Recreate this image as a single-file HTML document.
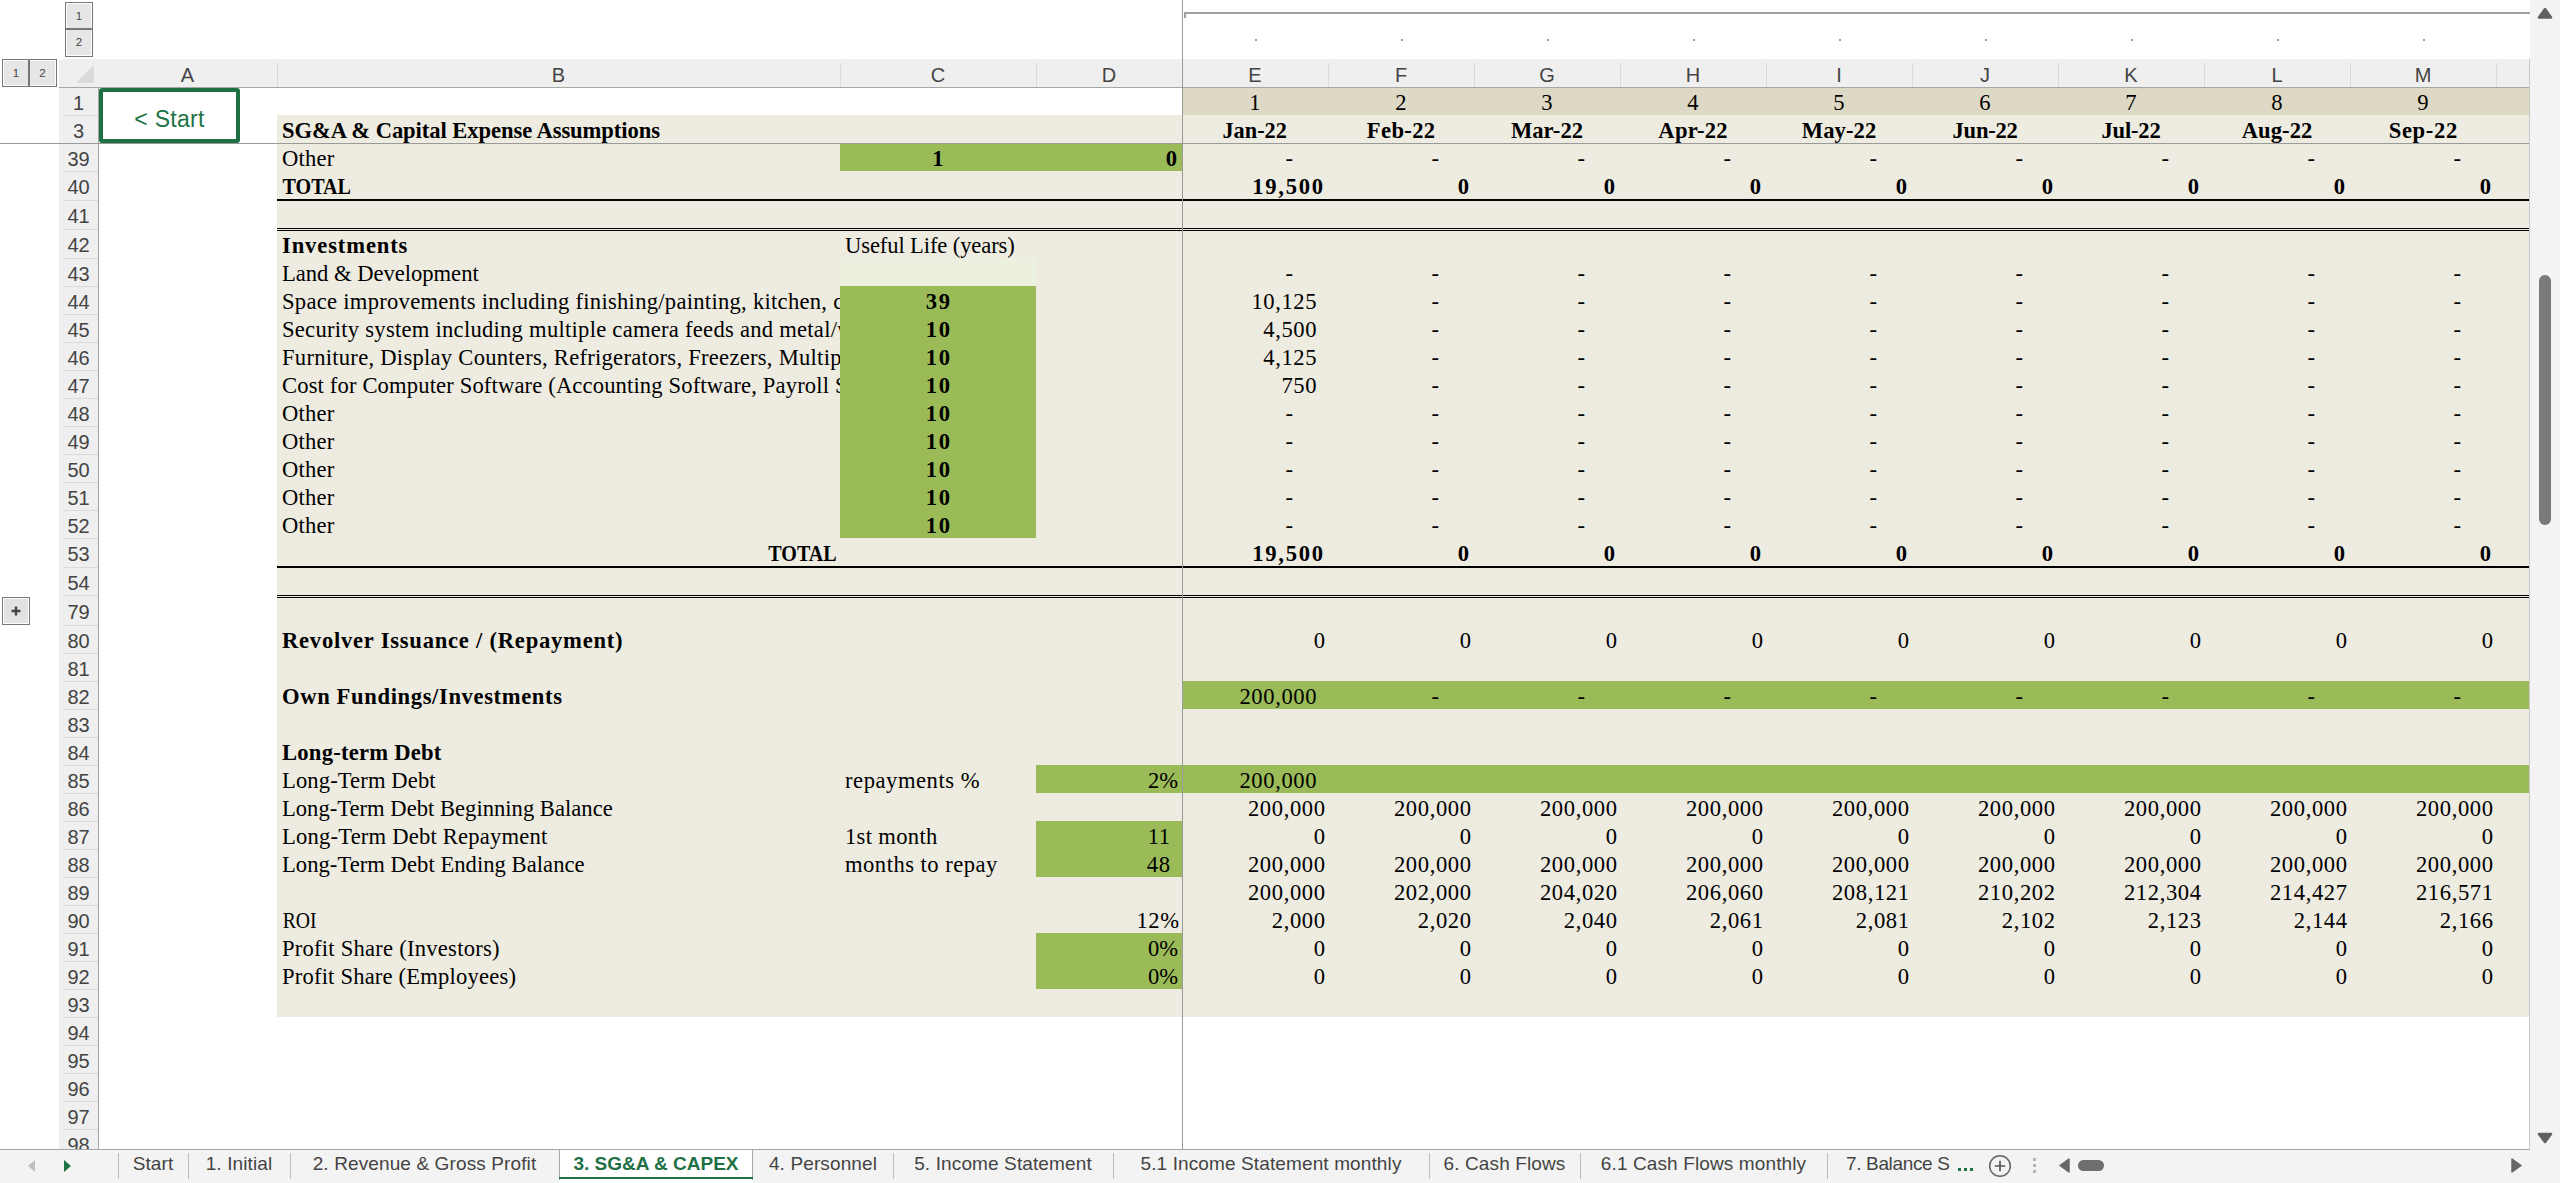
<!DOCTYPE html>
<html><head><meta charset="utf-8"><style>
html,body{margin:0;padding:0;}
body{width:2560px;height:1183px;overflow:hidden;position:relative;background:#fff;}
body>div,body>svg{position:absolute;}
</style></head><body>
<div style="left:2530px;top:0px;width:30px;height:1183px;background:#f3f3f3;"></div>
<div style="left:59px;top:59px;width:2471px;height:28px;background:#efefef;"></div>
<div style="left:59px;top:87px;width:39px;height:1062px;background:#efefef;"></div>
<div style="left:1183px;top:88px;width:1347px;height:27px;background:#ddd9c4;"></div>
<div style="left:277px;top:115px;width:2253px;height:902px;background:#eeece1;"></div>
<div style="left:840px;top:144px;width:342px;height:27px;background:#9bbb59;"></div>
<div style="left:840px;top:258px;width:196px;height:28px;background:#ebf1de;"></div>
<div style="left:840px;top:286px;width:196px;height:252px;background:#9bbb59;"></div>
<div style="left:1182px;top:681px;width:1348px;height:28px;background:#9bbb59;"></div>
<div style="left:1036px;top:765px;width:1494px;height:28px;background:#9bbb59;"></div>
<div style="left:1036px;top:821px;width:146px;height:56px;background:#9bbb59;"></div>
<div style="left:1036px;top:933px;width:146px;height:56px;background:#9bbb59;"></div>
<div style="left:277px;top:199px;width:2253px;height:2px;background:#000;"></div>
<div style="left:277px;top:228px;width:2253px;height:1px;background:#000;"></div>
<div style="left:277px;top:230px;width:2253px;height:1px;background:#000;"></div>
<div style="left:277px;top:566px;width:2253px;height:2px;background:#000;"></div>
<div style="left:277px;top:595px;width:2253px;height:1px;background:#000;"></div>
<div style="left:277px;top:597px;width:2253px;height:1px;background:#000;"></div>
<div style="left:98px;top:61px;width:179px;height:28px;line-height:28px;text-align:center;font-family:'Liberation Sans', sans-serif;font-size:20px;color:#444">A</div>
<div style="left:277px;top:61px;width:563px;height:28px;line-height:28px;text-align:center;font-family:'Liberation Sans', sans-serif;font-size:20px;color:#444">B</div>
<div style="left:277px;top:63px;width:1px;height:24px;background:#dadada"></div>
<div style="left:840px;top:61px;width:196px;height:28px;line-height:28px;text-align:center;font-family:'Liberation Sans', sans-serif;font-size:20px;color:#444">C</div>
<div style="left:840px;top:63px;width:1px;height:24px;background:#dadada"></div>
<div style="left:1036px;top:61px;width:146px;height:28px;line-height:28px;text-align:center;font-family:'Liberation Sans', sans-serif;font-size:20px;color:#444">D</div>
<div style="left:1036px;top:63px;width:1px;height:24px;background:#dadada"></div>
<div style="left:1182px;top:61px;width:146px;height:28px;line-height:28px;text-align:center;font-family:'Liberation Sans', sans-serif;font-size:20px;color:#444">E</div>
<div style="left:1328px;top:61px;width:146px;height:28px;line-height:28px;text-align:center;font-family:'Liberation Sans', sans-serif;font-size:20px;color:#444">F</div>
<div style="left:1328px;top:63px;width:1px;height:24px;background:#dadada"></div>
<div style="left:1474px;top:61px;width:146px;height:28px;line-height:28px;text-align:center;font-family:'Liberation Sans', sans-serif;font-size:20px;color:#444">G</div>
<div style="left:1474px;top:63px;width:1px;height:24px;background:#dadada"></div>
<div style="left:1620px;top:61px;width:146px;height:28px;line-height:28px;text-align:center;font-family:'Liberation Sans', sans-serif;font-size:20px;color:#444">H</div>
<div style="left:1620px;top:63px;width:1px;height:24px;background:#dadada"></div>
<div style="left:1766px;top:61px;width:146px;height:28px;line-height:28px;text-align:center;font-family:'Liberation Sans', sans-serif;font-size:20px;color:#444">I</div>
<div style="left:1766px;top:63px;width:1px;height:24px;background:#dadada"></div>
<div style="left:1912px;top:61px;width:146px;height:28px;line-height:28px;text-align:center;font-family:'Liberation Sans', sans-serif;font-size:20px;color:#444">J</div>
<div style="left:1912px;top:63px;width:1px;height:24px;background:#dadada"></div>
<div style="left:2058px;top:61px;width:146px;height:28px;line-height:28px;text-align:center;font-family:'Liberation Sans', sans-serif;font-size:20px;color:#444">K</div>
<div style="left:2058px;top:63px;width:1px;height:24px;background:#dadada"></div>
<div style="left:2204px;top:61px;width:146px;height:28px;line-height:28px;text-align:center;font-family:'Liberation Sans', sans-serif;font-size:20px;color:#444">L</div>
<div style="left:2204px;top:63px;width:1px;height:24px;background:#dadada"></div>
<div style="left:2350px;top:61px;width:146px;height:28px;line-height:28px;text-align:center;font-family:'Liberation Sans', sans-serif;font-size:20px;color:#444">M</div>
<div style="left:2350px;top:63px;width:1px;height:24px;background:#dadada"></div>
<div style="left:2496px;top:63px;width:1px;height:24px;background:#dadada"></div>
<div style="left:277px;top:63px;width:1px;height:24px;background:#dadada"></div>
<div style="left:59px;top:87px;width:2471px;height:1px;background:#a6a6a6;"></div>
<svg style="left:74px;top:63px" width="22" height="22"><polygon points="20,2 20,20 2,20" fill="#dadada"/></svg>
<div style="left:59px;top:89px;width:39px;height:28px;line-height:28px;text-align:center;font-family:'Liberation Sans', sans-serif;font-size:20px;color:#444">1</div>
<div style="left:63px;top:115px;width:35px;height:1px;background:#dadada"></div>
<div style="left:59px;top:117px;width:39px;height:28px;line-height:28px;text-align:center;font-family:'Liberation Sans', sans-serif;font-size:20px;color:#444">3</div>
<div style="left:63px;top:143px;width:35px;height:1px;background:#dadada"></div>
<div style="left:59px;top:145px;width:39px;height:28px;line-height:28px;text-align:center;font-family:'Liberation Sans', sans-serif;font-size:20px;color:#444">39</div>
<div style="left:63px;top:171px;width:35px;height:1px;background:#dadada"></div>
<div style="left:59px;top:173px;width:39px;height:29px;line-height:29px;text-align:center;font-family:'Liberation Sans', sans-serif;font-size:20px;color:#444">40</div>
<div style="left:63px;top:200px;width:35px;height:1px;background:#dadada"></div>
<div style="left:59px;top:202px;width:39px;height:29px;line-height:29px;text-align:center;font-family:'Liberation Sans', sans-serif;font-size:20px;color:#444">41</div>
<div style="left:63px;top:229px;width:35px;height:1px;background:#dadada"></div>
<div style="left:59px;top:231px;width:39px;height:29px;line-height:29px;text-align:center;font-family:'Liberation Sans', sans-serif;font-size:20px;color:#444">42</div>
<div style="left:63px;top:258px;width:35px;height:1px;background:#dadada"></div>
<div style="left:59px;top:260px;width:39px;height:28px;line-height:28px;text-align:center;font-family:'Liberation Sans', sans-serif;font-size:20px;color:#444">43</div>
<div style="left:63px;top:286px;width:35px;height:1px;background:#dadada"></div>
<div style="left:59px;top:288px;width:39px;height:28px;line-height:28px;text-align:center;font-family:'Liberation Sans', sans-serif;font-size:20px;color:#444">44</div>
<div style="left:63px;top:314px;width:35px;height:1px;background:#dadada"></div>
<div style="left:59px;top:316px;width:39px;height:28px;line-height:28px;text-align:center;font-family:'Liberation Sans', sans-serif;font-size:20px;color:#444">45</div>
<div style="left:63px;top:342px;width:35px;height:1px;background:#dadada"></div>
<div style="left:59px;top:344px;width:39px;height:28px;line-height:28px;text-align:center;font-family:'Liberation Sans', sans-serif;font-size:20px;color:#444">46</div>
<div style="left:63px;top:370px;width:35px;height:1px;background:#dadada"></div>
<div style="left:59px;top:372px;width:39px;height:28px;line-height:28px;text-align:center;font-family:'Liberation Sans', sans-serif;font-size:20px;color:#444">47</div>
<div style="left:63px;top:398px;width:35px;height:1px;background:#dadada"></div>
<div style="left:59px;top:400px;width:39px;height:28px;line-height:28px;text-align:center;font-family:'Liberation Sans', sans-serif;font-size:20px;color:#444">48</div>
<div style="left:63px;top:426px;width:35px;height:1px;background:#dadada"></div>
<div style="left:59px;top:428px;width:39px;height:28px;line-height:28px;text-align:center;font-family:'Liberation Sans', sans-serif;font-size:20px;color:#444">49</div>
<div style="left:63px;top:454px;width:35px;height:1px;background:#dadada"></div>
<div style="left:59px;top:456px;width:39px;height:28px;line-height:28px;text-align:center;font-family:'Liberation Sans', sans-serif;font-size:20px;color:#444">50</div>
<div style="left:63px;top:482px;width:35px;height:1px;background:#dadada"></div>
<div style="left:59px;top:484px;width:39px;height:28px;line-height:28px;text-align:center;font-family:'Liberation Sans', sans-serif;font-size:20px;color:#444">51</div>
<div style="left:63px;top:510px;width:35px;height:1px;background:#dadada"></div>
<div style="left:59px;top:512px;width:39px;height:28px;line-height:28px;text-align:center;font-family:'Liberation Sans', sans-serif;font-size:20px;color:#444">52</div>
<div style="left:63px;top:538px;width:35px;height:1px;background:#dadada"></div>
<div style="left:59px;top:540px;width:39px;height:29px;line-height:29px;text-align:center;font-family:'Liberation Sans', sans-serif;font-size:20px;color:#444">53</div>
<div style="left:63px;top:567px;width:35px;height:1px;background:#dadada"></div>
<div style="left:59px;top:569px;width:39px;height:28px;line-height:28px;text-align:center;font-family:'Liberation Sans', sans-serif;font-size:20px;color:#444">54</div>
<div style="left:63px;top:595px;width:35px;height:1px;background:#dadada"></div>
<div style="left:59px;top:597px;width:39px;height:30px;line-height:30px;text-align:center;font-family:'Liberation Sans', sans-serif;font-size:20px;color:#444">79</div>
<div style="left:63px;top:625px;width:35px;height:1px;background:#dadada"></div>
<div style="left:59px;top:627px;width:39px;height:28px;line-height:28px;text-align:center;font-family:'Liberation Sans', sans-serif;font-size:20px;color:#444">80</div>
<div style="left:63px;top:653px;width:35px;height:1px;background:#dadada"></div>
<div style="left:59px;top:655px;width:39px;height:28px;line-height:28px;text-align:center;font-family:'Liberation Sans', sans-serif;font-size:20px;color:#444">81</div>
<div style="left:63px;top:681px;width:35px;height:1px;background:#dadada"></div>
<div style="left:59px;top:683px;width:39px;height:28px;line-height:28px;text-align:center;font-family:'Liberation Sans', sans-serif;font-size:20px;color:#444">82</div>
<div style="left:63px;top:709px;width:35px;height:1px;background:#dadada"></div>
<div style="left:59px;top:711px;width:39px;height:28px;line-height:28px;text-align:center;font-family:'Liberation Sans', sans-serif;font-size:20px;color:#444">83</div>
<div style="left:63px;top:737px;width:35px;height:1px;background:#dadada"></div>
<div style="left:59px;top:739px;width:39px;height:28px;line-height:28px;text-align:center;font-family:'Liberation Sans', sans-serif;font-size:20px;color:#444">84</div>
<div style="left:63px;top:765px;width:35px;height:1px;background:#dadada"></div>
<div style="left:59px;top:767px;width:39px;height:28px;line-height:28px;text-align:center;font-family:'Liberation Sans', sans-serif;font-size:20px;color:#444">85</div>
<div style="left:63px;top:793px;width:35px;height:1px;background:#dadada"></div>
<div style="left:59px;top:795px;width:39px;height:28px;line-height:28px;text-align:center;font-family:'Liberation Sans', sans-serif;font-size:20px;color:#444">86</div>
<div style="left:63px;top:821px;width:35px;height:1px;background:#dadada"></div>
<div style="left:59px;top:823px;width:39px;height:28px;line-height:28px;text-align:center;font-family:'Liberation Sans', sans-serif;font-size:20px;color:#444">87</div>
<div style="left:63px;top:849px;width:35px;height:1px;background:#dadada"></div>
<div style="left:59px;top:851px;width:39px;height:28px;line-height:28px;text-align:center;font-family:'Liberation Sans', sans-serif;font-size:20px;color:#444">88</div>
<div style="left:63px;top:877px;width:35px;height:1px;background:#dadada"></div>
<div style="left:59px;top:879px;width:39px;height:28px;line-height:28px;text-align:center;font-family:'Liberation Sans', sans-serif;font-size:20px;color:#444">89</div>
<div style="left:63px;top:905px;width:35px;height:1px;background:#dadada"></div>
<div style="left:59px;top:907px;width:39px;height:28px;line-height:28px;text-align:center;font-family:'Liberation Sans', sans-serif;font-size:20px;color:#444">90</div>
<div style="left:63px;top:933px;width:35px;height:1px;background:#dadada"></div>
<div style="left:59px;top:935px;width:39px;height:28px;line-height:28px;text-align:center;font-family:'Liberation Sans', sans-serif;font-size:20px;color:#444">91</div>
<div style="left:63px;top:961px;width:35px;height:1px;background:#dadada"></div>
<div style="left:59px;top:963px;width:39px;height:28px;line-height:28px;text-align:center;font-family:'Liberation Sans', sans-serif;font-size:20px;color:#444">92</div>
<div style="left:63px;top:989px;width:35px;height:1px;background:#dadada"></div>
<div style="left:59px;top:991px;width:39px;height:28px;line-height:28px;text-align:center;font-family:'Liberation Sans', sans-serif;font-size:20px;color:#444">93</div>
<div style="left:63px;top:1017px;width:35px;height:1px;background:#dadada"></div>
<div style="left:59px;top:1019px;width:39px;height:28px;line-height:28px;text-align:center;font-family:'Liberation Sans', sans-serif;font-size:20px;color:#444">94</div>
<div style="left:63px;top:1045px;width:35px;height:1px;background:#dadada"></div>
<div style="left:59px;top:1047px;width:39px;height:28px;line-height:28px;text-align:center;font-family:'Liberation Sans', sans-serif;font-size:20px;color:#444">95</div>
<div style="left:63px;top:1073px;width:35px;height:1px;background:#dadada"></div>
<div style="left:59px;top:1075px;width:39px;height:28px;line-height:28px;text-align:center;font-family:'Liberation Sans', sans-serif;font-size:20px;color:#444">96</div>
<div style="left:63px;top:1101px;width:35px;height:1px;background:#dadada"></div>
<div style="left:59px;top:1103px;width:39px;height:28px;line-height:28px;text-align:center;font-family:'Liberation Sans', sans-serif;font-size:20px;color:#444">97</div>
<div style="left:63px;top:1129px;width:35px;height:1px;background:#dadada"></div>
<div style="left:59px;top:1131px;width:39px;height:28px;line-height:28px;text-align:center;font-family:'Liberation Sans', sans-serif;font-size:20px;color:#444">98</div>
<div style="left:63px;top:1157px;width:35px;height:1px;background:#dadada"></div>
<div style="left:98px;top:87px;width:1px;height:1062px;background:#a6a6a6;"></div>
<div style="left:0px;top:143px;width:2530px;height:1px;background:#9a9a9a;"></div>
<div style="left:1182px;top:0px;width:1px;height:1149px;background:#9a9a9a;"></div>
<div style="left:65px;top:2px;width:26px;height:53px;border:1px solid #777;background:#fff"></div>
<div style="left:65px;top:28px;width:28px;height:2px;background:#777;"></div>
<div style="left:67px;top:4px;width:24px;height:24px;background:#e6e6e6;line-height:24px;text-align:center;font-family:'Liberation Sans', sans-serif;font-size:11.5px;color:#444">1</div>
<div style="left:67px;top:30px;width:24px;height:25px;background:#e6e6e6;line-height:25px;text-align:center;font-family:'Liberation Sans', sans-serif;font-size:11.5px;color:#444">2</div>
<div style="left:2px;top:59px;width:53px;height:26px;border:1px solid #777;background:#fff"></div>
<div style="left:28px;top:59px;width:2px;height:28px;background:#777;"></div>
<div style="left:4px;top:61px;width:24px;height:24px;background:#e6e6e6;line-height:24px;text-align:center;font-family:'Liberation Sans', sans-serif;font-size:11.5px;color:#444">1</div>
<div style="left:30px;top:61px;width:25px;height:24px;background:#e6e6e6;line-height:24px;text-align:center;font-family:'Liberation Sans', sans-serif;font-size:11.5px;color:#444">2</div>
<div style="left:2px;top:597px;width:26px;height:26px;border:1px solid #777;background:#fff"></div>
<div style="left:4px;top:599px;width:24px;height:24px;background:#e3e3e3"></div>
<svg style="left:4px;top:599px" width="24" height="24"><path d="M12 7.5 V16.5 M7.5 12 H16.5" stroke="#444" stroke-width="2.4"/></svg>
<div style="left:1184px;top:12px;width:1346px;height:2px;background:#a0a0a0;"></div>
<div style="left:1184px;top:12px;width:2px;height:6px;background:#a0a0a0;"></div>
<div style="left:1255px;top:39px;width:2px;height:2px;background:#a0a0a0;"></div>
<div style="left:1401px;top:39px;width:2px;height:2px;background:#a0a0a0;"></div>
<div style="left:1547px;top:39px;width:2px;height:2px;background:#a0a0a0;"></div>
<div style="left:1693px;top:39px;width:2px;height:2px;background:#a0a0a0;"></div>
<div style="left:1839px;top:39px;width:2px;height:2px;background:#a0a0a0;"></div>
<div style="left:1985px;top:39px;width:2px;height:2px;background:#a0a0a0;"></div>
<div style="left:2131px;top:39px;width:2px;height:2px;background:#a0a0a0;"></div>
<div style="left:2277px;top:39px;width:2px;height:2px;background:#a0a0a0;"></div>
<div style="left:2423px;top:39px;width:2px;height:2px;background:#a0a0a0;"></div>
<div style="left:99px;top:88px;width:133px;height:47px;border:4px solid #1e7145;border-radius:3px;"></div>
<div style="left:99px;top:94px;width:141px;height:55px;line-height:50px;text-align:center;font-family:'Liberation Sans', sans-serif;font-size:23px;letter-spacing:0.3px;color:#217346">&lt; Start</div>
<div style="left:1182px;top:89px;width:146px;height:28px;line-height:28px;font-family:'Liberation Serif', serif;font-size:22.6px;color:#000;text-align:center;white-space:pre;">1</div>
<div style="left:1182px;top:117px;width:146px;height:28px;line-height:28px;font-family:'Liberation Serif', serif;font-size:22.6px;color:#000;text-align:center;white-space:pre;font-weight:bold;"><span style="display:inline-block;transform:scaleX(0.9865);transform-origin:50% 50%">Jan-22</span></div>
<div style="left:1328px;top:89px;width:146px;height:28px;line-height:28px;font-family:'Liberation Serif', serif;font-size:22.6px;color:#000;text-align:center;white-space:pre;">2</div>
<div style="left:1328px;top:117px;width:146px;height:28px;line-height:28px;font-family:'Liberation Serif', serif;font-size:22.6px;color:#000;text-align:center;white-space:pre;font-weight:bold;letter-spacing:0.357px;padding-left:0.357px;box-sizing:border-box;">Feb-22</div>
<div style="left:1474px;top:89px;width:146px;height:28px;line-height:28px;font-family:'Liberation Serif', serif;font-size:22.6px;color:#000;text-align:center;white-space:pre;">3</div>
<div style="left:1474px;top:117px;width:146px;height:28px;line-height:28px;font-family:'Liberation Serif', serif;font-size:22.6px;color:#000;text-align:center;white-space:pre;font-weight:bold;letter-spacing:0.053px;padding-left:0.053px;box-sizing:border-box;">Mar-22</div>
<div style="left:1620px;top:89px;width:146px;height:28px;line-height:28px;font-family:'Liberation Serif', serif;font-size:22.6px;color:#000;text-align:center;white-space:pre;">4</div>
<div style="left:1620px;top:117px;width:146px;height:28px;line-height:28px;font-family:'Liberation Serif', serif;font-size:22.6px;color:#000;text-align:center;white-space:pre;font-weight:bold;letter-spacing:0.219px;padding-left:0.219px;box-sizing:border-box;">Apr-22</div>
<div style="left:1766px;top:89px;width:146px;height:28px;line-height:28px;font-family:'Liberation Serif', serif;font-size:22.6px;color:#000;text-align:center;white-space:pre;">5</div>
<div style="left:1766px;top:117px;width:146px;height:28px;line-height:28px;font-family:'Liberation Serif', serif;font-size:22.6px;color:#000;text-align:center;white-space:pre;font-weight:bold;letter-spacing:0.071px;padding-left:0.071px;box-sizing:border-box;">May-22</div>
<div style="left:1912px;top:89px;width:146px;height:28px;line-height:28px;font-family:'Liberation Serif', serif;font-size:22.6px;color:#000;text-align:center;white-space:pre;">6</div>
<div style="left:1912px;top:117px;width:146px;height:28px;line-height:28px;font-family:'Liberation Serif', serif;font-size:22.6px;color:#000;text-align:center;white-space:pre;font-weight:bold;letter-spacing:-0.289px;padding-left:-0.289px;box-sizing:border-box;">Jun-22</div>
<div style="left:2058px;top:89px;width:146px;height:28px;line-height:28px;font-family:'Liberation Serif', serif;font-size:22.6px;color:#000;text-align:center;white-space:pre;">7</div>
<div style="left:2058px;top:117px;width:146px;height:28px;line-height:28px;font-family:'Liberation Serif', serif;font-size:22.6px;color:#000;text-align:center;white-space:pre;font-weight:bold;letter-spacing:-0.213px;padding-left:-0.213px;box-sizing:border-box;">Jul-22</div>
<div style="left:2204px;top:89px;width:146px;height:28px;line-height:28px;font-family:'Liberation Serif', serif;font-size:22.6px;color:#000;text-align:center;white-space:pre;">8</div>
<div style="left:2204px;top:117px;width:146px;height:28px;line-height:28px;font-family:'Liberation Serif', serif;font-size:22.6px;color:#000;text-align:center;white-space:pre;font-weight:bold;letter-spacing:0.081px;padding-left:0.081px;box-sizing:border-box;">Aug-22</div>
<div style="left:2350px;top:89px;width:146px;height:28px;line-height:28px;font-family:'Liberation Serif', serif;font-size:22.6px;color:#000;text-align:center;white-space:pre;">9</div>
<div style="left:2350px;top:117px;width:146px;height:28px;line-height:28px;font-family:'Liberation Serif', serif;font-size:22.6px;color:#000;text-align:center;white-space:pre;font-weight:bold;letter-spacing:0.664px;padding-left:0.664px;box-sizing:border-box;">Sep-22</div>
<div style="left:277px;top:117px;width:563px;height:28px;line-height:28px;font-family:'Liberation Serif', serif;font-size:22.6px;color:#000;text-align:left;white-space:pre;font-weight:bold;letter-spacing:-0.073px;padding-left:5px;box-sizing:border-box;">SG&amp;A &amp; Capital Expense Assumptions</div>
<div style="left:277px;top:145px;width:563px;height:28px;line-height:28px;font-family:'Liberation Serif', serif;font-size:22.6px;color:#000;text-align:left;white-space:pre;letter-spacing:0.212px;padding-left:5px;box-sizing:border-box;">Other</div>
<div style="left:840px;top:145px;width:196px;height:28px;line-height:28px;font-family:'Liberation Serif', serif;font-size:22.6px;color:#000;text-align:center;white-space:pre;font-weight:bold;">1</div>
<div style="left:1036px;top:145px;width:146px;height:28px;line-height:28px;font-family:'Liberation Serif', serif;font-size:22.6px;color:#000;text-align:right;white-space:pre;font-weight:bold;padding-right:5.000px;box-sizing:border-box;">0</div>
<div style="left:1182px;top:145px;width:146px;height:28px;line-height:28px;font-family:'Liberation Serif', serif;font-size:22.6px;color:#000;text-align:right;white-space:pre;padding-right:35.000px;box-sizing:border-box;">-</div>
<div style="left:1328px;top:145px;width:146px;height:28px;line-height:28px;font-family:'Liberation Serif', serif;font-size:22.6px;color:#000;text-align:right;white-space:pre;padding-right:35.000px;box-sizing:border-box;">-</div>
<div style="left:1474px;top:145px;width:146px;height:28px;line-height:28px;font-family:'Liberation Serif', serif;font-size:22.6px;color:#000;text-align:right;white-space:pre;padding-right:35.000px;box-sizing:border-box;">-</div>
<div style="left:1620px;top:145px;width:146px;height:28px;line-height:28px;font-family:'Liberation Serif', serif;font-size:22.6px;color:#000;text-align:right;white-space:pre;padding-right:35.000px;box-sizing:border-box;">-</div>
<div style="left:1766px;top:145px;width:146px;height:28px;line-height:28px;font-family:'Liberation Serif', serif;font-size:22.6px;color:#000;text-align:right;white-space:pre;padding-right:35.000px;box-sizing:border-box;">-</div>
<div style="left:1912px;top:145px;width:146px;height:28px;line-height:28px;font-family:'Liberation Serif', serif;font-size:22.6px;color:#000;text-align:right;white-space:pre;padding-right:35.000px;box-sizing:border-box;">-</div>
<div style="left:2058px;top:145px;width:146px;height:28px;line-height:28px;font-family:'Liberation Serif', serif;font-size:22.6px;color:#000;text-align:right;white-space:pre;padding-right:35.000px;box-sizing:border-box;">-</div>
<div style="left:2204px;top:145px;width:146px;height:28px;line-height:28px;font-family:'Liberation Serif', serif;font-size:22.6px;color:#000;text-align:right;white-space:pre;padding-right:35.000px;box-sizing:border-box;">-</div>
<div style="left:2350px;top:145px;width:146px;height:28px;line-height:28px;font-family:'Liberation Serif', serif;font-size:22.6px;color:#000;text-align:right;white-space:pre;padding-right:35.000px;box-sizing:border-box;">-</div>
<div style="left:277px;top:173px;width:563px;height:28px;line-height:28px;font-family:'Liberation Serif', serif;font-size:22.6px;color:#000;text-align:left;white-space:pre;font-weight:bold;padding-left:5px;box-sizing:border-box;"><span style="display:inline-block;transform:scaleX(0.8881);transform-origin:5px 50%">TOTAL</span></div>
<div style="left:1182px;top:173px;width:146px;height:28px;line-height:28px;font-family:'Liberation Serif', serif;font-size:22.6px;color:#000;text-align:right;white-space:pre;font-weight:bold;letter-spacing:1.700px;padding-right:3.300px;box-sizing:border-box;">19,500</div>
<div style="left:1328px;top:173px;width:146px;height:28px;line-height:28px;font-family:'Liberation Serif', serif;font-size:22.6px;color:#000;text-align:right;white-space:pre;font-weight:bold;padding-right:5.000px;box-sizing:border-box;">0</div>
<div style="left:1474px;top:173px;width:146px;height:28px;line-height:28px;font-family:'Liberation Serif', serif;font-size:22.6px;color:#000;text-align:right;white-space:pre;font-weight:bold;padding-right:5.000px;box-sizing:border-box;">0</div>
<div style="left:1620px;top:173px;width:146px;height:28px;line-height:28px;font-family:'Liberation Serif', serif;font-size:22.6px;color:#000;text-align:right;white-space:pre;font-weight:bold;padding-right:5.000px;box-sizing:border-box;">0</div>
<div style="left:1766px;top:173px;width:146px;height:28px;line-height:28px;font-family:'Liberation Serif', serif;font-size:22.6px;color:#000;text-align:right;white-space:pre;font-weight:bold;padding-right:5.000px;box-sizing:border-box;">0</div>
<div style="left:1912px;top:173px;width:146px;height:28px;line-height:28px;font-family:'Liberation Serif', serif;font-size:22.6px;color:#000;text-align:right;white-space:pre;font-weight:bold;padding-right:5.000px;box-sizing:border-box;">0</div>
<div style="left:2058px;top:173px;width:146px;height:28px;line-height:28px;font-family:'Liberation Serif', serif;font-size:22.6px;color:#000;text-align:right;white-space:pre;font-weight:bold;padding-right:5.000px;box-sizing:border-box;">0</div>
<div style="left:2204px;top:173px;width:146px;height:28px;line-height:28px;font-family:'Liberation Serif', serif;font-size:22.6px;color:#000;text-align:right;white-space:pre;font-weight:bold;padding-right:5.000px;box-sizing:border-box;">0</div>
<div style="left:2350px;top:173px;width:146px;height:28px;line-height:28px;font-family:'Liberation Serif', serif;font-size:22.6px;color:#000;text-align:right;white-space:pre;font-weight:bold;padding-right:5.000px;box-sizing:border-box;">0</div>
<div style="left:277px;top:232px;width:563px;height:28px;line-height:28px;font-family:'Liberation Serif', serif;font-size:22.6px;color:#000;text-align:left;white-space:pre;font-weight:bold;letter-spacing:0.867px;padding-left:5px;box-sizing:border-box;">Investments</div>
<div style="left:840px;top:232px;width:342px;height:28px;line-height:28px;font-family:'Liberation Serif', serif;font-size:22.6px;color:#000;text-align:left;white-space:pre;letter-spacing:-0.116px;padding-left:5px;box-sizing:border-box;">Useful Life (years)</div>
<div style="left:277px;top:260px;width:563px;height:28px;line-height:28px;font-family:'Liberation Serif', serif;font-size:22.6px;color:#000;text-align:left;white-space:pre;letter-spacing:-0.019px;padding-left:5px;box-sizing:border-box;">Land &amp; Development</div>
<div style="left:1182px;top:260px;width:146px;height:28px;line-height:28px;font-family:'Liberation Serif', serif;font-size:22.6px;color:#000;text-align:right;white-space:pre;padding-right:35.000px;box-sizing:border-box;">-</div>
<div style="left:1328px;top:260px;width:146px;height:28px;line-height:28px;font-family:'Liberation Serif', serif;font-size:22.6px;color:#000;text-align:right;white-space:pre;padding-right:35.000px;box-sizing:border-box;">-</div>
<div style="left:1474px;top:260px;width:146px;height:28px;line-height:28px;font-family:'Liberation Serif', serif;font-size:22.6px;color:#000;text-align:right;white-space:pre;padding-right:35.000px;box-sizing:border-box;">-</div>
<div style="left:1620px;top:260px;width:146px;height:28px;line-height:28px;font-family:'Liberation Serif', serif;font-size:22.6px;color:#000;text-align:right;white-space:pre;padding-right:35.000px;box-sizing:border-box;">-</div>
<div style="left:1766px;top:260px;width:146px;height:28px;line-height:28px;font-family:'Liberation Serif', serif;font-size:22.6px;color:#000;text-align:right;white-space:pre;padding-right:35.000px;box-sizing:border-box;">-</div>
<div style="left:1912px;top:260px;width:146px;height:28px;line-height:28px;font-family:'Liberation Serif', serif;font-size:22.6px;color:#000;text-align:right;white-space:pre;padding-right:35.000px;box-sizing:border-box;">-</div>
<div style="left:2058px;top:260px;width:146px;height:28px;line-height:28px;font-family:'Liberation Serif', serif;font-size:22.6px;color:#000;text-align:right;white-space:pre;padding-right:35.000px;box-sizing:border-box;">-</div>
<div style="left:2204px;top:260px;width:146px;height:28px;line-height:28px;font-family:'Liberation Serif', serif;font-size:22.6px;color:#000;text-align:right;white-space:pre;padding-right:35.000px;box-sizing:border-box;">-</div>
<div style="left:2350px;top:260px;width:146px;height:28px;line-height:28px;font-family:'Liberation Serif', serif;font-size:22.6px;color:#000;text-align:right;white-space:pre;padding-right:35.000px;box-sizing:border-box;">-</div>
<div style="left:277px;top:288px;width:563px;height:28px;line-height:28px;font-family:'Liberation Serif', serif;font-size:22.6px;color:#000;text-align:left;white-space:pre;letter-spacing:0.275px;padding-left:5px;box-sizing:border-box;overflow:hidden;">Space improvements including finishing/painting, kitchen, counters</div>
<div style="left:840px;top:288px;width:196px;height:28px;line-height:28px;font-family:'Liberation Serif', serif;font-size:22.6px;color:#000;text-align:center;white-space:pre;font-weight:bold;letter-spacing:1.700px;padding-left:1.700px;box-sizing:border-box;">39</div>
<div style="left:1182px;top:288px;width:146px;height:28px;line-height:28px;font-family:'Liberation Serif', serif;font-size:22.6px;color:#000;text-align:right;white-space:pre;letter-spacing:0.600px;padding-right:10.900px;box-sizing:border-box;">10,125</div>
<div style="left:1328px;top:288px;width:146px;height:28px;line-height:28px;font-family:'Liberation Serif', serif;font-size:22.6px;color:#000;text-align:right;white-space:pre;padding-right:35.000px;box-sizing:border-box;">-</div>
<div style="left:1474px;top:288px;width:146px;height:28px;line-height:28px;font-family:'Liberation Serif', serif;font-size:22.6px;color:#000;text-align:right;white-space:pre;padding-right:35.000px;box-sizing:border-box;">-</div>
<div style="left:1620px;top:288px;width:146px;height:28px;line-height:28px;font-family:'Liberation Serif', serif;font-size:22.6px;color:#000;text-align:right;white-space:pre;padding-right:35.000px;box-sizing:border-box;">-</div>
<div style="left:1766px;top:288px;width:146px;height:28px;line-height:28px;font-family:'Liberation Serif', serif;font-size:22.6px;color:#000;text-align:right;white-space:pre;padding-right:35.000px;box-sizing:border-box;">-</div>
<div style="left:1912px;top:288px;width:146px;height:28px;line-height:28px;font-family:'Liberation Serif', serif;font-size:22.6px;color:#000;text-align:right;white-space:pre;padding-right:35.000px;box-sizing:border-box;">-</div>
<div style="left:2058px;top:288px;width:146px;height:28px;line-height:28px;font-family:'Liberation Serif', serif;font-size:22.6px;color:#000;text-align:right;white-space:pre;padding-right:35.000px;box-sizing:border-box;">-</div>
<div style="left:2204px;top:288px;width:146px;height:28px;line-height:28px;font-family:'Liberation Serif', serif;font-size:22.6px;color:#000;text-align:right;white-space:pre;padding-right:35.000px;box-sizing:border-box;">-</div>
<div style="left:2350px;top:288px;width:146px;height:28px;line-height:28px;font-family:'Liberation Serif', serif;font-size:22.6px;color:#000;text-align:right;white-space:pre;padding-right:35.000px;box-sizing:border-box;">-</div>
<div style="left:277px;top:316px;width:563px;height:28px;line-height:28px;font-family:'Liberation Serif', serif;font-size:22.6px;color:#000;text-align:left;white-space:pre;letter-spacing:0.259px;padding-left:5px;box-sizing:border-box;overflow:hidden;">Security system including multiple camera feeds and metal/wood doors</div>
<div style="left:840px;top:316px;width:196px;height:28px;line-height:28px;font-family:'Liberation Serif', serif;font-size:22.6px;color:#000;text-align:center;white-space:pre;font-weight:bold;letter-spacing:1.700px;padding-left:1.700px;box-sizing:border-box;">10</div>
<div style="left:1182px;top:316px;width:146px;height:28px;line-height:28px;font-family:'Liberation Serif', serif;font-size:22.6px;color:#000;text-align:right;white-space:pre;letter-spacing:0.600px;padding-right:10.900px;box-sizing:border-box;">4,500</div>
<div style="left:1328px;top:316px;width:146px;height:28px;line-height:28px;font-family:'Liberation Serif', serif;font-size:22.6px;color:#000;text-align:right;white-space:pre;padding-right:35.000px;box-sizing:border-box;">-</div>
<div style="left:1474px;top:316px;width:146px;height:28px;line-height:28px;font-family:'Liberation Serif', serif;font-size:22.6px;color:#000;text-align:right;white-space:pre;padding-right:35.000px;box-sizing:border-box;">-</div>
<div style="left:1620px;top:316px;width:146px;height:28px;line-height:28px;font-family:'Liberation Serif', serif;font-size:22.6px;color:#000;text-align:right;white-space:pre;padding-right:35.000px;box-sizing:border-box;">-</div>
<div style="left:1766px;top:316px;width:146px;height:28px;line-height:28px;font-family:'Liberation Serif', serif;font-size:22.6px;color:#000;text-align:right;white-space:pre;padding-right:35.000px;box-sizing:border-box;">-</div>
<div style="left:1912px;top:316px;width:146px;height:28px;line-height:28px;font-family:'Liberation Serif', serif;font-size:22.6px;color:#000;text-align:right;white-space:pre;padding-right:35.000px;box-sizing:border-box;">-</div>
<div style="left:2058px;top:316px;width:146px;height:28px;line-height:28px;font-family:'Liberation Serif', serif;font-size:22.6px;color:#000;text-align:right;white-space:pre;padding-right:35.000px;box-sizing:border-box;">-</div>
<div style="left:2204px;top:316px;width:146px;height:28px;line-height:28px;font-family:'Liberation Serif', serif;font-size:22.6px;color:#000;text-align:right;white-space:pre;padding-right:35.000px;box-sizing:border-box;">-</div>
<div style="left:2350px;top:316px;width:146px;height:28px;line-height:28px;font-family:'Liberation Serif', serif;font-size:22.6px;color:#000;text-align:right;white-space:pre;padding-right:35.000px;box-sizing:border-box;">-</div>
<div style="left:277px;top:344px;width:563px;height:28px;line-height:28px;font-family:'Liberation Serif', serif;font-size:22.6px;color:#000;text-align:left;white-space:pre;letter-spacing:0.262px;padding-left:5px;box-sizing:border-box;overflow:hidden;">Furniture, Display Counters, Refrigerators, Freezers, Multipurpose</div>
<div style="left:840px;top:344px;width:196px;height:28px;line-height:28px;font-family:'Liberation Serif', serif;font-size:22.6px;color:#000;text-align:center;white-space:pre;font-weight:bold;letter-spacing:1.700px;padding-left:1.700px;box-sizing:border-box;">10</div>
<div style="left:1182px;top:344px;width:146px;height:28px;line-height:28px;font-family:'Liberation Serif', serif;font-size:22.6px;color:#000;text-align:right;white-space:pre;letter-spacing:0.600px;padding-right:10.900px;box-sizing:border-box;">4,125</div>
<div style="left:1328px;top:344px;width:146px;height:28px;line-height:28px;font-family:'Liberation Serif', serif;font-size:22.6px;color:#000;text-align:right;white-space:pre;padding-right:35.000px;box-sizing:border-box;">-</div>
<div style="left:1474px;top:344px;width:146px;height:28px;line-height:28px;font-family:'Liberation Serif', serif;font-size:22.6px;color:#000;text-align:right;white-space:pre;padding-right:35.000px;box-sizing:border-box;">-</div>
<div style="left:1620px;top:344px;width:146px;height:28px;line-height:28px;font-family:'Liberation Serif', serif;font-size:22.6px;color:#000;text-align:right;white-space:pre;padding-right:35.000px;box-sizing:border-box;">-</div>
<div style="left:1766px;top:344px;width:146px;height:28px;line-height:28px;font-family:'Liberation Serif', serif;font-size:22.6px;color:#000;text-align:right;white-space:pre;padding-right:35.000px;box-sizing:border-box;">-</div>
<div style="left:1912px;top:344px;width:146px;height:28px;line-height:28px;font-family:'Liberation Serif', serif;font-size:22.6px;color:#000;text-align:right;white-space:pre;padding-right:35.000px;box-sizing:border-box;">-</div>
<div style="left:2058px;top:344px;width:146px;height:28px;line-height:28px;font-family:'Liberation Serif', serif;font-size:22.6px;color:#000;text-align:right;white-space:pre;padding-right:35.000px;box-sizing:border-box;">-</div>
<div style="left:2204px;top:344px;width:146px;height:28px;line-height:28px;font-family:'Liberation Serif', serif;font-size:22.6px;color:#000;text-align:right;white-space:pre;padding-right:35.000px;box-sizing:border-box;">-</div>
<div style="left:2350px;top:344px;width:146px;height:28px;line-height:28px;font-family:'Liberation Serif', serif;font-size:22.6px;color:#000;text-align:right;white-space:pre;padding-right:35.000px;box-sizing:border-box;">-</div>
<div style="left:277px;top:372px;width:563px;height:28px;line-height:28px;font-family:'Liberation Serif', serif;font-size:22.6px;color:#000;text-align:left;white-space:pre;letter-spacing:0.145px;padding-left:5px;box-sizing:border-box;overflow:hidden;">Cost for Computer Software (Accounting Software, Payroll Software)</div>
<div style="left:840px;top:372px;width:196px;height:28px;line-height:28px;font-family:'Liberation Serif', serif;font-size:22.6px;color:#000;text-align:center;white-space:pre;font-weight:bold;letter-spacing:1.700px;padding-left:1.700px;box-sizing:border-box;">10</div>
<div style="left:1182px;top:372px;width:146px;height:28px;line-height:28px;font-family:'Liberation Serif', serif;font-size:22.6px;color:#000;text-align:right;white-space:pre;letter-spacing:0.600px;padding-right:10.900px;box-sizing:border-box;">750</div>
<div style="left:1328px;top:372px;width:146px;height:28px;line-height:28px;font-family:'Liberation Serif', serif;font-size:22.6px;color:#000;text-align:right;white-space:pre;padding-right:35.000px;box-sizing:border-box;">-</div>
<div style="left:1474px;top:372px;width:146px;height:28px;line-height:28px;font-family:'Liberation Serif', serif;font-size:22.6px;color:#000;text-align:right;white-space:pre;padding-right:35.000px;box-sizing:border-box;">-</div>
<div style="left:1620px;top:372px;width:146px;height:28px;line-height:28px;font-family:'Liberation Serif', serif;font-size:22.6px;color:#000;text-align:right;white-space:pre;padding-right:35.000px;box-sizing:border-box;">-</div>
<div style="left:1766px;top:372px;width:146px;height:28px;line-height:28px;font-family:'Liberation Serif', serif;font-size:22.6px;color:#000;text-align:right;white-space:pre;padding-right:35.000px;box-sizing:border-box;">-</div>
<div style="left:1912px;top:372px;width:146px;height:28px;line-height:28px;font-family:'Liberation Serif', serif;font-size:22.6px;color:#000;text-align:right;white-space:pre;padding-right:35.000px;box-sizing:border-box;">-</div>
<div style="left:2058px;top:372px;width:146px;height:28px;line-height:28px;font-family:'Liberation Serif', serif;font-size:22.6px;color:#000;text-align:right;white-space:pre;padding-right:35.000px;box-sizing:border-box;">-</div>
<div style="left:2204px;top:372px;width:146px;height:28px;line-height:28px;font-family:'Liberation Serif', serif;font-size:22.6px;color:#000;text-align:right;white-space:pre;padding-right:35.000px;box-sizing:border-box;">-</div>
<div style="left:2350px;top:372px;width:146px;height:28px;line-height:28px;font-family:'Liberation Serif', serif;font-size:22.6px;color:#000;text-align:right;white-space:pre;padding-right:35.000px;box-sizing:border-box;">-</div>
<div style="left:277px;top:400px;width:563px;height:28px;line-height:28px;font-family:'Liberation Serif', serif;font-size:22.6px;color:#000;text-align:left;white-space:pre;letter-spacing:0.212px;padding-left:5px;box-sizing:border-box;">Other</div>
<div style="left:840px;top:400px;width:196px;height:28px;line-height:28px;font-family:'Liberation Serif', serif;font-size:22.6px;color:#000;text-align:center;white-space:pre;font-weight:bold;letter-spacing:1.700px;padding-left:1.700px;box-sizing:border-box;">10</div>
<div style="left:1182px;top:400px;width:146px;height:28px;line-height:28px;font-family:'Liberation Serif', serif;font-size:22.6px;color:#000;text-align:right;white-space:pre;padding-right:35.000px;box-sizing:border-box;">-</div>
<div style="left:1328px;top:400px;width:146px;height:28px;line-height:28px;font-family:'Liberation Serif', serif;font-size:22.6px;color:#000;text-align:right;white-space:pre;padding-right:35.000px;box-sizing:border-box;">-</div>
<div style="left:1474px;top:400px;width:146px;height:28px;line-height:28px;font-family:'Liberation Serif', serif;font-size:22.6px;color:#000;text-align:right;white-space:pre;padding-right:35.000px;box-sizing:border-box;">-</div>
<div style="left:1620px;top:400px;width:146px;height:28px;line-height:28px;font-family:'Liberation Serif', serif;font-size:22.6px;color:#000;text-align:right;white-space:pre;padding-right:35.000px;box-sizing:border-box;">-</div>
<div style="left:1766px;top:400px;width:146px;height:28px;line-height:28px;font-family:'Liberation Serif', serif;font-size:22.6px;color:#000;text-align:right;white-space:pre;padding-right:35.000px;box-sizing:border-box;">-</div>
<div style="left:1912px;top:400px;width:146px;height:28px;line-height:28px;font-family:'Liberation Serif', serif;font-size:22.6px;color:#000;text-align:right;white-space:pre;padding-right:35.000px;box-sizing:border-box;">-</div>
<div style="left:2058px;top:400px;width:146px;height:28px;line-height:28px;font-family:'Liberation Serif', serif;font-size:22.6px;color:#000;text-align:right;white-space:pre;padding-right:35.000px;box-sizing:border-box;">-</div>
<div style="left:2204px;top:400px;width:146px;height:28px;line-height:28px;font-family:'Liberation Serif', serif;font-size:22.6px;color:#000;text-align:right;white-space:pre;padding-right:35.000px;box-sizing:border-box;">-</div>
<div style="left:2350px;top:400px;width:146px;height:28px;line-height:28px;font-family:'Liberation Serif', serif;font-size:22.6px;color:#000;text-align:right;white-space:pre;padding-right:35.000px;box-sizing:border-box;">-</div>
<div style="left:277px;top:428px;width:563px;height:28px;line-height:28px;font-family:'Liberation Serif', serif;font-size:22.6px;color:#000;text-align:left;white-space:pre;letter-spacing:0.212px;padding-left:5px;box-sizing:border-box;">Other</div>
<div style="left:840px;top:428px;width:196px;height:28px;line-height:28px;font-family:'Liberation Serif', serif;font-size:22.6px;color:#000;text-align:center;white-space:pre;font-weight:bold;letter-spacing:1.700px;padding-left:1.700px;box-sizing:border-box;">10</div>
<div style="left:1182px;top:428px;width:146px;height:28px;line-height:28px;font-family:'Liberation Serif', serif;font-size:22.6px;color:#000;text-align:right;white-space:pre;padding-right:35.000px;box-sizing:border-box;">-</div>
<div style="left:1328px;top:428px;width:146px;height:28px;line-height:28px;font-family:'Liberation Serif', serif;font-size:22.6px;color:#000;text-align:right;white-space:pre;padding-right:35.000px;box-sizing:border-box;">-</div>
<div style="left:1474px;top:428px;width:146px;height:28px;line-height:28px;font-family:'Liberation Serif', serif;font-size:22.6px;color:#000;text-align:right;white-space:pre;padding-right:35.000px;box-sizing:border-box;">-</div>
<div style="left:1620px;top:428px;width:146px;height:28px;line-height:28px;font-family:'Liberation Serif', serif;font-size:22.6px;color:#000;text-align:right;white-space:pre;padding-right:35.000px;box-sizing:border-box;">-</div>
<div style="left:1766px;top:428px;width:146px;height:28px;line-height:28px;font-family:'Liberation Serif', serif;font-size:22.6px;color:#000;text-align:right;white-space:pre;padding-right:35.000px;box-sizing:border-box;">-</div>
<div style="left:1912px;top:428px;width:146px;height:28px;line-height:28px;font-family:'Liberation Serif', serif;font-size:22.6px;color:#000;text-align:right;white-space:pre;padding-right:35.000px;box-sizing:border-box;">-</div>
<div style="left:2058px;top:428px;width:146px;height:28px;line-height:28px;font-family:'Liberation Serif', serif;font-size:22.6px;color:#000;text-align:right;white-space:pre;padding-right:35.000px;box-sizing:border-box;">-</div>
<div style="left:2204px;top:428px;width:146px;height:28px;line-height:28px;font-family:'Liberation Serif', serif;font-size:22.6px;color:#000;text-align:right;white-space:pre;padding-right:35.000px;box-sizing:border-box;">-</div>
<div style="left:2350px;top:428px;width:146px;height:28px;line-height:28px;font-family:'Liberation Serif', serif;font-size:22.6px;color:#000;text-align:right;white-space:pre;padding-right:35.000px;box-sizing:border-box;">-</div>
<div style="left:277px;top:456px;width:563px;height:28px;line-height:28px;font-family:'Liberation Serif', serif;font-size:22.6px;color:#000;text-align:left;white-space:pre;letter-spacing:0.212px;padding-left:5px;box-sizing:border-box;">Other</div>
<div style="left:840px;top:456px;width:196px;height:28px;line-height:28px;font-family:'Liberation Serif', serif;font-size:22.6px;color:#000;text-align:center;white-space:pre;font-weight:bold;letter-spacing:1.700px;padding-left:1.700px;box-sizing:border-box;">10</div>
<div style="left:1182px;top:456px;width:146px;height:28px;line-height:28px;font-family:'Liberation Serif', serif;font-size:22.6px;color:#000;text-align:right;white-space:pre;padding-right:35.000px;box-sizing:border-box;">-</div>
<div style="left:1328px;top:456px;width:146px;height:28px;line-height:28px;font-family:'Liberation Serif', serif;font-size:22.6px;color:#000;text-align:right;white-space:pre;padding-right:35.000px;box-sizing:border-box;">-</div>
<div style="left:1474px;top:456px;width:146px;height:28px;line-height:28px;font-family:'Liberation Serif', serif;font-size:22.6px;color:#000;text-align:right;white-space:pre;padding-right:35.000px;box-sizing:border-box;">-</div>
<div style="left:1620px;top:456px;width:146px;height:28px;line-height:28px;font-family:'Liberation Serif', serif;font-size:22.6px;color:#000;text-align:right;white-space:pre;padding-right:35.000px;box-sizing:border-box;">-</div>
<div style="left:1766px;top:456px;width:146px;height:28px;line-height:28px;font-family:'Liberation Serif', serif;font-size:22.6px;color:#000;text-align:right;white-space:pre;padding-right:35.000px;box-sizing:border-box;">-</div>
<div style="left:1912px;top:456px;width:146px;height:28px;line-height:28px;font-family:'Liberation Serif', serif;font-size:22.6px;color:#000;text-align:right;white-space:pre;padding-right:35.000px;box-sizing:border-box;">-</div>
<div style="left:2058px;top:456px;width:146px;height:28px;line-height:28px;font-family:'Liberation Serif', serif;font-size:22.6px;color:#000;text-align:right;white-space:pre;padding-right:35.000px;box-sizing:border-box;">-</div>
<div style="left:2204px;top:456px;width:146px;height:28px;line-height:28px;font-family:'Liberation Serif', serif;font-size:22.6px;color:#000;text-align:right;white-space:pre;padding-right:35.000px;box-sizing:border-box;">-</div>
<div style="left:2350px;top:456px;width:146px;height:28px;line-height:28px;font-family:'Liberation Serif', serif;font-size:22.6px;color:#000;text-align:right;white-space:pre;padding-right:35.000px;box-sizing:border-box;">-</div>
<div style="left:277px;top:484px;width:563px;height:28px;line-height:28px;font-family:'Liberation Serif', serif;font-size:22.6px;color:#000;text-align:left;white-space:pre;letter-spacing:0.212px;padding-left:5px;box-sizing:border-box;">Other</div>
<div style="left:840px;top:484px;width:196px;height:28px;line-height:28px;font-family:'Liberation Serif', serif;font-size:22.6px;color:#000;text-align:center;white-space:pre;font-weight:bold;letter-spacing:1.700px;padding-left:1.700px;box-sizing:border-box;">10</div>
<div style="left:1182px;top:484px;width:146px;height:28px;line-height:28px;font-family:'Liberation Serif', serif;font-size:22.6px;color:#000;text-align:right;white-space:pre;padding-right:35.000px;box-sizing:border-box;">-</div>
<div style="left:1328px;top:484px;width:146px;height:28px;line-height:28px;font-family:'Liberation Serif', serif;font-size:22.6px;color:#000;text-align:right;white-space:pre;padding-right:35.000px;box-sizing:border-box;">-</div>
<div style="left:1474px;top:484px;width:146px;height:28px;line-height:28px;font-family:'Liberation Serif', serif;font-size:22.6px;color:#000;text-align:right;white-space:pre;padding-right:35.000px;box-sizing:border-box;">-</div>
<div style="left:1620px;top:484px;width:146px;height:28px;line-height:28px;font-family:'Liberation Serif', serif;font-size:22.6px;color:#000;text-align:right;white-space:pre;padding-right:35.000px;box-sizing:border-box;">-</div>
<div style="left:1766px;top:484px;width:146px;height:28px;line-height:28px;font-family:'Liberation Serif', serif;font-size:22.6px;color:#000;text-align:right;white-space:pre;padding-right:35.000px;box-sizing:border-box;">-</div>
<div style="left:1912px;top:484px;width:146px;height:28px;line-height:28px;font-family:'Liberation Serif', serif;font-size:22.6px;color:#000;text-align:right;white-space:pre;padding-right:35.000px;box-sizing:border-box;">-</div>
<div style="left:2058px;top:484px;width:146px;height:28px;line-height:28px;font-family:'Liberation Serif', serif;font-size:22.6px;color:#000;text-align:right;white-space:pre;padding-right:35.000px;box-sizing:border-box;">-</div>
<div style="left:2204px;top:484px;width:146px;height:28px;line-height:28px;font-family:'Liberation Serif', serif;font-size:22.6px;color:#000;text-align:right;white-space:pre;padding-right:35.000px;box-sizing:border-box;">-</div>
<div style="left:2350px;top:484px;width:146px;height:28px;line-height:28px;font-family:'Liberation Serif', serif;font-size:22.6px;color:#000;text-align:right;white-space:pre;padding-right:35.000px;box-sizing:border-box;">-</div>
<div style="left:277px;top:512px;width:563px;height:28px;line-height:28px;font-family:'Liberation Serif', serif;font-size:22.6px;color:#000;text-align:left;white-space:pre;letter-spacing:0.212px;padding-left:5px;box-sizing:border-box;">Other</div>
<div style="left:840px;top:512px;width:196px;height:28px;line-height:28px;font-family:'Liberation Serif', serif;font-size:22.6px;color:#000;text-align:center;white-space:pre;font-weight:bold;letter-spacing:1.700px;padding-left:1.700px;box-sizing:border-box;">10</div>
<div style="left:1182px;top:512px;width:146px;height:28px;line-height:28px;font-family:'Liberation Serif', serif;font-size:22.6px;color:#000;text-align:right;white-space:pre;padding-right:35.000px;box-sizing:border-box;">-</div>
<div style="left:1328px;top:512px;width:146px;height:28px;line-height:28px;font-family:'Liberation Serif', serif;font-size:22.6px;color:#000;text-align:right;white-space:pre;padding-right:35.000px;box-sizing:border-box;">-</div>
<div style="left:1474px;top:512px;width:146px;height:28px;line-height:28px;font-family:'Liberation Serif', serif;font-size:22.6px;color:#000;text-align:right;white-space:pre;padding-right:35.000px;box-sizing:border-box;">-</div>
<div style="left:1620px;top:512px;width:146px;height:28px;line-height:28px;font-family:'Liberation Serif', serif;font-size:22.6px;color:#000;text-align:right;white-space:pre;padding-right:35.000px;box-sizing:border-box;">-</div>
<div style="left:1766px;top:512px;width:146px;height:28px;line-height:28px;font-family:'Liberation Serif', serif;font-size:22.6px;color:#000;text-align:right;white-space:pre;padding-right:35.000px;box-sizing:border-box;">-</div>
<div style="left:1912px;top:512px;width:146px;height:28px;line-height:28px;font-family:'Liberation Serif', serif;font-size:22.6px;color:#000;text-align:right;white-space:pre;padding-right:35.000px;box-sizing:border-box;">-</div>
<div style="left:2058px;top:512px;width:146px;height:28px;line-height:28px;font-family:'Liberation Serif', serif;font-size:22.6px;color:#000;text-align:right;white-space:pre;padding-right:35.000px;box-sizing:border-box;">-</div>
<div style="left:2204px;top:512px;width:146px;height:28px;line-height:28px;font-family:'Liberation Serif', serif;font-size:22.6px;color:#000;text-align:right;white-space:pre;padding-right:35.000px;box-sizing:border-box;">-</div>
<div style="left:2350px;top:512px;width:146px;height:28px;line-height:28px;font-family:'Liberation Serif', serif;font-size:22.6px;color:#000;text-align:right;white-space:pre;padding-right:35.000px;box-sizing:border-box;">-</div>
<div style="left:277px;top:540px;width:563px;height:28px;line-height:28px;font-family:'Liberation Serif', serif;font-size:22.6px;color:#000;text-align:right;white-space:pre;font-weight:bold;padding-right:3.000px;box-sizing:border-box;"><span style="display:inline-block;transform:scaleX(0.8881);transform-origin:calc(100% - 3px) 50%">TOTAL</span></div>
<div style="left:1182px;top:540px;width:146px;height:28px;line-height:28px;font-family:'Liberation Serif', serif;font-size:22.6px;color:#000;text-align:right;white-space:pre;font-weight:bold;letter-spacing:1.700px;padding-right:3.300px;box-sizing:border-box;">19,500</div>
<div style="left:1328px;top:540px;width:146px;height:28px;line-height:28px;font-family:'Liberation Serif', serif;font-size:22.6px;color:#000;text-align:right;white-space:pre;font-weight:bold;padding-right:5.000px;box-sizing:border-box;">0</div>
<div style="left:1474px;top:540px;width:146px;height:28px;line-height:28px;font-family:'Liberation Serif', serif;font-size:22.6px;color:#000;text-align:right;white-space:pre;font-weight:bold;padding-right:5.000px;box-sizing:border-box;">0</div>
<div style="left:1620px;top:540px;width:146px;height:28px;line-height:28px;font-family:'Liberation Serif', serif;font-size:22.6px;color:#000;text-align:right;white-space:pre;font-weight:bold;padding-right:5.000px;box-sizing:border-box;">0</div>
<div style="left:1766px;top:540px;width:146px;height:28px;line-height:28px;font-family:'Liberation Serif', serif;font-size:22.6px;color:#000;text-align:right;white-space:pre;font-weight:bold;padding-right:5.000px;box-sizing:border-box;">0</div>
<div style="left:1912px;top:540px;width:146px;height:28px;line-height:28px;font-family:'Liberation Serif', serif;font-size:22.6px;color:#000;text-align:right;white-space:pre;font-weight:bold;padding-right:5.000px;box-sizing:border-box;">0</div>
<div style="left:2058px;top:540px;width:146px;height:28px;line-height:28px;font-family:'Liberation Serif', serif;font-size:22.6px;color:#000;text-align:right;white-space:pre;font-weight:bold;padding-right:5.000px;box-sizing:border-box;">0</div>
<div style="left:2204px;top:540px;width:146px;height:28px;line-height:28px;font-family:'Liberation Serif', serif;font-size:22.6px;color:#000;text-align:right;white-space:pre;font-weight:bold;padding-right:5.000px;box-sizing:border-box;">0</div>
<div style="left:2350px;top:540px;width:146px;height:28px;line-height:28px;font-family:'Liberation Serif', serif;font-size:22.6px;color:#000;text-align:right;white-space:pre;font-weight:bold;padding-right:5.000px;box-sizing:border-box;">0</div>
<div style="left:277px;top:627px;width:563px;height:28px;line-height:28px;font-family:'Liberation Serif', serif;font-size:22.6px;color:#000;text-align:left;white-space:pre;font-weight:bold;letter-spacing:0.762px;padding-left:5px;box-sizing:border-box;">Revolver Issuance / (Repayment)</div>
<div style="left:1182px;top:627px;width:146px;height:28px;line-height:28px;font-family:'Liberation Serif', serif;font-size:22.6px;color:#000;text-align:right;white-space:pre;padding-right:3.000px;box-sizing:border-box;">0</div>
<div style="left:1328px;top:627px;width:146px;height:28px;line-height:28px;font-family:'Liberation Serif', serif;font-size:22.6px;color:#000;text-align:right;white-space:pre;padding-right:3.000px;box-sizing:border-box;">0</div>
<div style="left:1474px;top:627px;width:146px;height:28px;line-height:28px;font-family:'Liberation Serif', serif;font-size:22.6px;color:#000;text-align:right;white-space:pre;padding-right:3.000px;box-sizing:border-box;">0</div>
<div style="left:1620px;top:627px;width:146px;height:28px;line-height:28px;font-family:'Liberation Serif', serif;font-size:22.6px;color:#000;text-align:right;white-space:pre;padding-right:3.000px;box-sizing:border-box;">0</div>
<div style="left:1766px;top:627px;width:146px;height:28px;line-height:28px;font-family:'Liberation Serif', serif;font-size:22.6px;color:#000;text-align:right;white-space:pre;padding-right:3.000px;box-sizing:border-box;">0</div>
<div style="left:1912px;top:627px;width:146px;height:28px;line-height:28px;font-family:'Liberation Serif', serif;font-size:22.6px;color:#000;text-align:right;white-space:pre;padding-right:3.000px;box-sizing:border-box;">0</div>
<div style="left:2058px;top:627px;width:146px;height:28px;line-height:28px;font-family:'Liberation Serif', serif;font-size:22.6px;color:#000;text-align:right;white-space:pre;padding-right:3.000px;box-sizing:border-box;">0</div>
<div style="left:2204px;top:627px;width:146px;height:28px;line-height:28px;font-family:'Liberation Serif', serif;font-size:22.6px;color:#000;text-align:right;white-space:pre;padding-right:3.000px;box-sizing:border-box;">0</div>
<div style="left:2350px;top:627px;width:146px;height:28px;line-height:28px;font-family:'Liberation Serif', serif;font-size:22.6px;color:#000;text-align:right;white-space:pre;padding-right:3.000px;box-sizing:border-box;">0</div>
<div style="left:277px;top:683px;width:563px;height:28px;line-height:28px;font-family:'Liberation Serif', serif;font-size:22.6px;color:#000;text-align:left;white-space:pre;font-weight:bold;letter-spacing:0.628px;padding-left:5px;box-sizing:border-box;">Own Fundings/Investments</div>
<div style="left:1182px;top:683px;width:146px;height:28px;line-height:28px;font-family:'Liberation Serif', serif;font-size:22.6px;color:#000;text-align:right;white-space:pre;letter-spacing:0.600px;padding-right:10.900px;box-sizing:border-box;">200,000</div>
<div style="left:1328px;top:683px;width:146px;height:28px;line-height:28px;font-family:'Liberation Serif', serif;font-size:22.6px;color:#000;text-align:right;white-space:pre;padding-right:35.000px;box-sizing:border-box;">-</div>
<div style="left:1474px;top:683px;width:146px;height:28px;line-height:28px;font-family:'Liberation Serif', serif;font-size:22.6px;color:#000;text-align:right;white-space:pre;padding-right:35.000px;box-sizing:border-box;">-</div>
<div style="left:1620px;top:683px;width:146px;height:28px;line-height:28px;font-family:'Liberation Serif', serif;font-size:22.6px;color:#000;text-align:right;white-space:pre;padding-right:35.000px;box-sizing:border-box;">-</div>
<div style="left:1766px;top:683px;width:146px;height:28px;line-height:28px;font-family:'Liberation Serif', serif;font-size:22.6px;color:#000;text-align:right;white-space:pre;padding-right:35.000px;box-sizing:border-box;">-</div>
<div style="left:1912px;top:683px;width:146px;height:28px;line-height:28px;font-family:'Liberation Serif', serif;font-size:22.6px;color:#000;text-align:right;white-space:pre;padding-right:35.000px;box-sizing:border-box;">-</div>
<div style="left:2058px;top:683px;width:146px;height:28px;line-height:28px;font-family:'Liberation Serif', serif;font-size:22.6px;color:#000;text-align:right;white-space:pre;padding-right:35.000px;box-sizing:border-box;">-</div>
<div style="left:2204px;top:683px;width:146px;height:28px;line-height:28px;font-family:'Liberation Serif', serif;font-size:22.6px;color:#000;text-align:right;white-space:pre;padding-right:35.000px;box-sizing:border-box;">-</div>
<div style="left:2350px;top:683px;width:146px;height:28px;line-height:28px;font-family:'Liberation Serif', serif;font-size:22.6px;color:#000;text-align:right;white-space:pre;padding-right:35.000px;box-sizing:border-box;">-</div>
<div style="left:277px;top:739px;width:563px;height:28px;line-height:28px;font-family:'Liberation Serif', serif;font-size:22.6px;color:#000;text-align:left;white-space:pre;font-weight:bold;letter-spacing:0.242px;padding-left:5px;box-sizing:border-box;">Long-term Debt</div>
<div style="left:277px;top:767px;width:563px;height:28px;line-height:28px;font-family:'Liberation Serif', serif;font-size:22.6px;color:#000;text-align:left;white-space:pre;letter-spacing:0.112px;padding-left:5px;box-sizing:border-box;">Long-Term Debt</div>
<div style="left:840px;top:767px;width:196px;height:28px;line-height:28px;font-family:'Liberation Serif', serif;font-size:22.6px;color:#000;text-align:left;white-space:pre;letter-spacing:0.543px;padding-left:5px;box-sizing:border-box;">repayments %</div>
<div style="left:1036px;top:767px;width:146px;height:28px;line-height:28px;font-family:'Liberation Serif', serif;font-size:22.6px;color:#000;text-align:right;white-space:pre;padding-right:4.000px;box-sizing:border-box;">2%</div>
<div style="left:1182px;top:767px;width:146px;height:28px;line-height:28px;font-family:'Liberation Serif', serif;font-size:22.6px;color:#000;text-align:right;white-space:pre;letter-spacing:0.600px;padding-right:10.900px;box-sizing:border-box;">200,000</div>
<div style="left:277px;top:795px;width:563px;height:28px;line-height:28px;font-family:'Liberation Serif', serif;font-size:22.6px;color:#000;text-align:left;white-space:pre;letter-spacing:0.012px;padding-left:5px;box-sizing:border-box;">Long-Term Debt Beginning Balance</div>
<div style="left:1182px;top:795px;width:146px;height:28px;line-height:28px;font-family:'Liberation Serif', serif;font-size:22.6px;color:#000;text-align:right;white-space:pre;letter-spacing:0.600px;padding-right:2.400px;box-sizing:border-box;">200,000</div>
<div style="left:1328px;top:795px;width:146px;height:28px;line-height:28px;font-family:'Liberation Serif', serif;font-size:22.6px;color:#000;text-align:right;white-space:pre;letter-spacing:0.600px;padding-right:2.400px;box-sizing:border-box;">200,000</div>
<div style="left:1474px;top:795px;width:146px;height:28px;line-height:28px;font-family:'Liberation Serif', serif;font-size:22.6px;color:#000;text-align:right;white-space:pre;letter-spacing:0.600px;padding-right:2.400px;box-sizing:border-box;">200,000</div>
<div style="left:1620px;top:795px;width:146px;height:28px;line-height:28px;font-family:'Liberation Serif', serif;font-size:22.6px;color:#000;text-align:right;white-space:pre;letter-spacing:0.600px;padding-right:2.400px;box-sizing:border-box;">200,000</div>
<div style="left:1766px;top:795px;width:146px;height:28px;line-height:28px;font-family:'Liberation Serif', serif;font-size:22.6px;color:#000;text-align:right;white-space:pre;letter-spacing:0.600px;padding-right:2.400px;box-sizing:border-box;">200,000</div>
<div style="left:1912px;top:795px;width:146px;height:28px;line-height:28px;font-family:'Liberation Serif', serif;font-size:22.6px;color:#000;text-align:right;white-space:pre;letter-spacing:0.600px;padding-right:2.400px;box-sizing:border-box;">200,000</div>
<div style="left:2058px;top:795px;width:146px;height:28px;line-height:28px;font-family:'Liberation Serif', serif;font-size:22.6px;color:#000;text-align:right;white-space:pre;letter-spacing:0.600px;padding-right:2.400px;box-sizing:border-box;">200,000</div>
<div style="left:2204px;top:795px;width:146px;height:28px;line-height:28px;font-family:'Liberation Serif', serif;font-size:22.6px;color:#000;text-align:right;white-space:pre;letter-spacing:0.600px;padding-right:2.400px;box-sizing:border-box;">200,000</div>
<div style="left:2350px;top:795px;width:146px;height:28px;line-height:28px;font-family:'Liberation Serif', serif;font-size:22.6px;color:#000;text-align:right;white-space:pre;letter-spacing:0.600px;padding-right:2.400px;box-sizing:border-box;">200,000</div>
<div style="left:277px;top:823px;width:563px;height:28px;line-height:28px;font-family:'Liberation Serif', serif;font-size:22.6px;color:#000;text-align:left;white-space:pre;letter-spacing:0.201px;padding-left:5px;box-sizing:border-box;">Long-Term Debt Repayment</div>
<div style="left:840px;top:823px;width:196px;height:28px;line-height:28px;font-family:'Liberation Serif', serif;font-size:22.6px;color:#000;text-align:left;white-space:pre;letter-spacing:0.317px;padding-left:5px;box-sizing:border-box;">1st month</div>
<div style="left:1036px;top:823px;width:146px;height:28px;line-height:28px;font-family:'Liberation Serif', serif;font-size:22.6px;color:#000;text-align:right;white-space:pre;letter-spacing:0.600px;padding-right:11.400px;box-sizing:border-box;">11</div>
<div style="left:1182px;top:823px;width:146px;height:28px;line-height:28px;font-family:'Liberation Serif', serif;font-size:22.6px;color:#000;text-align:right;white-space:pre;padding-right:3.000px;box-sizing:border-box;">0</div>
<div style="left:1328px;top:823px;width:146px;height:28px;line-height:28px;font-family:'Liberation Serif', serif;font-size:22.6px;color:#000;text-align:right;white-space:pre;padding-right:3.000px;box-sizing:border-box;">0</div>
<div style="left:1474px;top:823px;width:146px;height:28px;line-height:28px;font-family:'Liberation Serif', serif;font-size:22.6px;color:#000;text-align:right;white-space:pre;padding-right:3.000px;box-sizing:border-box;">0</div>
<div style="left:1620px;top:823px;width:146px;height:28px;line-height:28px;font-family:'Liberation Serif', serif;font-size:22.6px;color:#000;text-align:right;white-space:pre;padding-right:3.000px;box-sizing:border-box;">0</div>
<div style="left:1766px;top:823px;width:146px;height:28px;line-height:28px;font-family:'Liberation Serif', serif;font-size:22.6px;color:#000;text-align:right;white-space:pre;padding-right:3.000px;box-sizing:border-box;">0</div>
<div style="left:1912px;top:823px;width:146px;height:28px;line-height:28px;font-family:'Liberation Serif', serif;font-size:22.6px;color:#000;text-align:right;white-space:pre;padding-right:3.000px;box-sizing:border-box;">0</div>
<div style="left:2058px;top:823px;width:146px;height:28px;line-height:28px;font-family:'Liberation Serif', serif;font-size:22.6px;color:#000;text-align:right;white-space:pre;padding-right:3.000px;box-sizing:border-box;">0</div>
<div style="left:2204px;top:823px;width:146px;height:28px;line-height:28px;font-family:'Liberation Serif', serif;font-size:22.6px;color:#000;text-align:right;white-space:pre;padding-right:3.000px;box-sizing:border-box;">0</div>
<div style="left:2350px;top:823px;width:146px;height:28px;line-height:28px;font-family:'Liberation Serif', serif;font-size:22.6px;color:#000;text-align:right;white-space:pre;padding-right:3.000px;box-sizing:border-box;">0</div>
<div style="left:277px;top:851px;width:563px;height:28px;line-height:28px;font-family:'Liberation Serif', serif;font-size:22.6px;color:#000;text-align:left;white-space:pre;letter-spacing:0.041px;padding-left:5px;box-sizing:border-box;">Long-Term Debt Ending Balance</div>
<div style="left:840px;top:851px;width:196px;height:28px;line-height:28px;font-family:'Liberation Serif', serif;font-size:22.6px;color:#000;text-align:left;white-space:pre;letter-spacing:0.486px;padding-left:5px;box-sizing:border-box;">months to repay</div>
<div style="left:1036px;top:851px;width:146px;height:28px;line-height:28px;font-family:'Liberation Serif', serif;font-size:22.6px;color:#000;text-align:right;white-space:pre;letter-spacing:0.600px;padding-right:11.400px;box-sizing:border-box;">48</div>
<div style="left:1182px;top:851px;width:146px;height:28px;line-height:28px;font-family:'Liberation Serif', serif;font-size:22.6px;color:#000;text-align:right;white-space:pre;letter-spacing:0.600px;padding-right:2.400px;box-sizing:border-box;">200,000</div>
<div style="left:1328px;top:851px;width:146px;height:28px;line-height:28px;font-family:'Liberation Serif', serif;font-size:22.6px;color:#000;text-align:right;white-space:pre;letter-spacing:0.600px;padding-right:2.400px;box-sizing:border-box;">200,000</div>
<div style="left:1474px;top:851px;width:146px;height:28px;line-height:28px;font-family:'Liberation Serif', serif;font-size:22.6px;color:#000;text-align:right;white-space:pre;letter-spacing:0.600px;padding-right:2.400px;box-sizing:border-box;">200,000</div>
<div style="left:1620px;top:851px;width:146px;height:28px;line-height:28px;font-family:'Liberation Serif', serif;font-size:22.6px;color:#000;text-align:right;white-space:pre;letter-spacing:0.600px;padding-right:2.400px;box-sizing:border-box;">200,000</div>
<div style="left:1766px;top:851px;width:146px;height:28px;line-height:28px;font-family:'Liberation Serif', serif;font-size:22.6px;color:#000;text-align:right;white-space:pre;letter-spacing:0.600px;padding-right:2.400px;box-sizing:border-box;">200,000</div>
<div style="left:1912px;top:851px;width:146px;height:28px;line-height:28px;font-family:'Liberation Serif', serif;font-size:22.6px;color:#000;text-align:right;white-space:pre;letter-spacing:0.600px;padding-right:2.400px;box-sizing:border-box;">200,000</div>
<div style="left:2058px;top:851px;width:146px;height:28px;line-height:28px;font-family:'Liberation Serif', serif;font-size:22.6px;color:#000;text-align:right;white-space:pre;letter-spacing:0.600px;padding-right:2.400px;box-sizing:border-box;">200,000</div>
<div style="left:2204px;top:851px;width:146px;height:28px;line-height:28px;font-family:'Liberation Serif', serif;font-size:22.6px;color:#000;text-align:right;white-space:pre;letter-spacing:0.600px;padding-right:2.400px;box-sizing:border-box;">200,000</div>
<div style="left:2350px;top:851px;width:146px;height:28px;line-height:28px;font-family:'Liberation Serif', serif;font-size:22.6px;color:#000;text-align:right;white-space:pre;letter-spacing:0.600px;padding-right:2.400px;box-sizing:border-box;">200,000</div>
<div style="left:1182px;top:879px;width:146px;height:28px;line-height:28px;font-family:'Liberation Serif', serif;font-size:22.6px;color:#000;text-align:right;white-space:pre;letter-spacing:0.600px;padding-right:2.400px;box-sizing:border-box;">200,000</div>
<div style="left:1182px;top:907px;width:146px;height:28px;line-height:28px;font-family:'Liberation Serif', serif;font-size:22.6px;color:#000;text-align:right;white-space:pre;letter-spacing:0.600px;padding-right:2.400px;box-sizing:border-box;">2,000</div>
<div style="left:1328px;top:879px;width:146px;height:28px;line-height:28px;font-family:'Liberation Serif', serif;font-size:22.6px;color:#000;text-align:right;white-space:pre;letter-spacing:0.600px;padding-right:2.400px;box-sizing:border-box;">202,000</div>
<div style="left:1328px;top:907px;width:146px;height:28px;line-height:28px;font-family:'Liberation Serif', serif;font-size:22.6px;color:#000;text-align:right;white-space:pre;letter-spacing:0.600px;padding-right:2.400px;box-sizing:border-box;">2,020</div>
<div style="left:1474px;top:879px;width:146px;height:28px;line-height:28px;font-family:'Liberation Serif', serif;font-size:22.6px;color:#000;text-align:right;white-space:pre;letter-spacing:0.600px;padding-right:2.400px;box-sizing:border-box;">204,020</div>
<div style="left:1474px;top:907px;width:146px;height:28px;line-height:28px;font-family:'Liberation Serif', serif;font-size:22.6px;color:#000;text-align:right;white-space:pre;letter-spacing:0.600px;padding-right:2.400px;box-sizing:border-box;">2,040</div>
<div style="left:1620px;top:879px;width:146px;height:28px;line-height:28px;font-family:'Liberation Serif', serif;font-size:22.6px;color:#000;text-align:right;white-space:pre;letter-spacing:0.600px;padding-right:2.400px;box-sizing:border-box;">206,060</div>
<div style="left:1620px;top:907px;width:146px;height:28px;line-height:28px;font-family:'Liberation Serif', serif;font-size:22.6px;color:#000;text-align:right;white-space:pre;letter-spacing:0.600px;padding-right:2.400px;box-sizing:border-box;">2,061</div>
<div style="left:1766px;top:879px;width:146px;height:28px;line-height:28px;font-family:'Liberation Serif', serif;font-size:22.6px;color:#000;text-align:right;white-space:pre;letter-spacing:0.600px;padding-right:2.400px;box-sizing:border-box;">208,121</div>
<div style="left:1766px;top:907px;width:146px;height:28px;line-height:28px;font-family:'Liberation Serif', serif;font-size:22.6px;color:#000;text-align:right;white-space:pre;letter-spacing:0.600px;padding-right:2.400px;box-sizing:border-box;">2,081</div>
<div style="left:1912px;top:879px;width:146px;height:28px;line-height:28px;font-family:'Liberation Serif', serif;font-size:22.6px;color:#000;text-align:right;white-space:pre;letter-spacing:0.600px;padding-right:2.400px;box-sizing:border-box;">210,202</div>
<div style="left:1912px;top:907px;width:146px;height:28px;line-height:28px;font-family:'Liberation Serif', serif;font-size:22.6px;color:#000;text-align:right;white-space:pre;letter-spacing:0.600px;padding-right:2.400px;box-sizing:border-box;">2,102</div>
<div style="left:2058px;top:879px;width:146px;height:28px;line-height:28px;font-family:'Liberation Serif', serif;font-size:22.6px;color:#000;text-align:right;white-space:pre;letter-spacing:0.600px;padding-right:2.400px;box-sizing:border-box;">212,304</div>
<div style="left:2058px;top:907px;width:146px;height:28px;line-height:28px;font-family:'Liberation Serif', serif;font-size:22.6px;color:#000;text-align:right;white-space:pre;letter-spacing:0.600px;padding-right:2.400px;box-sizing:border-box;">2,123</div>
<div style="left:2204px;top:879px;width:146px;height:28px;line-height:28px;font-family:'Liberation Serif', serif;font-size:22.6px;color:#000;text-align:right;white-space:pre;letter-spacing:0.600px;padding-right:2.400px;box-sizing:border-box;">214,427</div>
<div style="left:2204px;top:907px;width:146px;height:28px;line-height:28px;font-family:'Liberation Serif', serif;font-size:22.6px;color:#000;text-align:right;white-space:pre;letter-spacing:0.600px;padding-right:2.400px;box-sizing:border-box;">2,144</div>
<div style="left:2350px;top:879px;width:146px;height:28px;line-height:28px;font-family:'Liberation Serif', serif;font-size:22.6px;color:#000;text-align:right;white-space:pre;letter-spacing:0.600px;padding-right:2.400px;box-sizing:border-box;">216,571</div>
<div style="left:2350px;top:907px;width:146px;height:28px;line-height:28px;font-family:'Liberation Serif', serif;font-size:22.6px;color:#000;text-align:right;white-space:pre;letter-spacing:0.600px;padding-right:2.400px;box-sizing:border-box;">2,166</div>
<div style="left:277px;top:907px;width:563px;height:28px;line-height:28px;font-family:'Liberation Serif', serif;font-size:22.6px;color:#000;text-align:left;white-space:pre;padding-left:5px;box-sizing:border-box;"><span style="display:inline-block;transform:scaleX(0.8735);transform-origin:5px 50%">ROI</span></div>
<div style="left:1036px;top:907px;width:146px;height:28px;line-height:28px;font-family:'Liberation Serif', serif;font-size:22.6px;color:#000;text-align:right;white-space:pre;letter-spacing:0.600px;padding-right:2.400px;box-sizing:border-box;">12%</div>
<div style="left:277px;top:935px;width:563px;height:28px;line-height:28px;font-family:'Liberation Serif', serif;font-size:22.6px;color:#000;text-align:left;white-space:pre;letter-spacing:0.235px;padding-left:5px;box-sizing:border-box;">Profit Share (Investors)</div>
<div style="left:1036px;top:935px;width:146px;height:28px;line-height:28px;font-family:'Liberation Serif', serif;font-size:22.6px;color:#000;text-align:right;white-space:pre;padding-right:4.000px;box-sizing:border-box;">0%</div>
<div style="left:277px;top:963px;width:563px;height:28px;line-height:28px;font-family:'Liberation Serif', serif;font-size:22.6px;color:#000;text-align:left;white-space:pre;letter-spacing:0.185px;padding-left:5px;box-sizing:border-box;">Profit Share (Employees)</div>
<div style="left:1036px;top:963px;width:146px;height:28px;line-height:28px;font-family:'Liberation Serif', serif;font-size:22.6px;color:#000;text-align:right;white-space:pre;padding-right:4.000px;box-sizing:border-box;">0%</div>
<div style="left:1182px;top:935px;width:146px;height:28px;line-height:28px;font-family:'Liberation Serif', serif;font-size:22.6px;color:#000;text-align:right;white-space:pre;padding-right:3.000px;box-sizing:border-box;">0</div>
<div style="left:1182px;top:963px;width:146px;height:28px;line-height:28px;font-family:'Liberation Serif', serif;font-size:22.6px;color:#000;text-align:right;white-space:pre;padding-right:3.000px;box-sizing:border-box;">0</div>
<div style="left:1328px;top:935px;width:146px;height:28px;line-height:28px;font-family:'Liberation Serif', serif;font-size:22.6px;color:#000;text-align:right;white-space:pre;padding-right:3.000px;box-sizing:border-box;">0</div>
<div style="left:1328px;top:963px;width:146px;height:28px;line-height:28px;font-family:'Liberation Serif', serif;font-size:22.6px;color:#000;text-align:right;white-space:pre;padding-right:3.000px;box-sizing:border-box;">0</div>
<div style="left:1474px;top:935px;width:146px;height:28px;line-height:28px;font-family:'Liberation Serif', serif;font-size:22.6px;color:#000;text-align:right;white-space:pre;padding-right:3.000px;box-sizing:border-box;">0</div>
<div style="left:1474px;top:963px;width:146px;height:28px;line-height:28px;font-family:'Liberation Serif', serif;font-size:22.6px;color:#000;text-align:right;white-space:pre;padding-right:3.000px;box-sizing:border-box;">0</div>
<div style="left:1620px;top:935px;width:146px;height:28px;line-height:28px;font-family:'Liberation Serif', serif;font-size:22.6px;color:#000;text-align:right;white-space:pre;padding-right:3.000px;box-sizing:border-box;">0</div>
<div style="left:1620px;top:963px;width:146px;height:28px;line-height:28px;font-family:'Liberation Serif', serif;font-size:22.6px;color:#000;text-align:right;white-space:pre;padding-right:3.000px;box-sizing:border-box;">0</div>
<div style="left:1766px;top:935px;width:146px;height:28px;line-height:28px;font-family:'Liberation Serif', serif;font-size:22.6px;color:#000;text-align:right;white-space:pre;padding-right:3.000px;box-sizing:border-box;">0</div>
<div style="left:1766px;top:963px;width:146px;height:28px;line-height:28px;font-family:'Liberation Serif', serif;font-size:22.6px;color:#000;text-align:right;white-space:pre;padding-right:3.000px;box-sizing:border-box;">0</div>
<div style="left:1912px;top:935px;width:146px;height:28px;line-height:28px;font-family:'Liberation Serif', serif;font-size:22.6px;color:#000;text-align:right;white-space:pre;padding-right:3.000px;box-sizing:border-box;">0</div>
<div style="left:1912px;top:963px;width:146px;height:28px;line-height:28px;font-family:'Liberation Serif', serif;font-size:22.6px;color:#000;text-align:right;white-space:pre;padding-right:3.000px;box-sizing:border-box;">0</div>
<div style="left:2058px;top:935px;width:146px;height:28px;line-height:28px;font-family:'Liberation Serif', serif;font-size:22.6px;color:#000;text-align:right;white-space:pre;padding-right:3.000px;box-sizing:border-box;">0</div>
<div style="left:2058px;top:963px;width:146px;height:28px;line-height:28px;font-family:'Liberation Serif', serif;font-size:22.6px;color:#000;text-align:right;white-space:pre;padding-right:3.000px;box-sizing:border-box;">0</div>
<div style="left:2204px;top:935px;width:146px;height:28px;line-height:28px;font-family:'Liberation Serif', serif;font-size:22.6px;color:#000;text-align:right;white-space:pre;padding-right:3.000px;box-sizing:border-box;">0</div>
<div style="left:2204px;top:963px;width:146px;height:28px;line-height:28px;font-family:'Liberation Serif', serif;font-size:22.6px;color:#000;text-align:right;white-space:pre;padding-right:3.000px;box-sizing:border-box;">0</div>
<div style="left:2350px;top:935px;width:146px;height:28px;line-height:28px;font-family:'Liberation Serif', serif;font-size:22.6px;color:#000;text-align:right;white-space:pre;padding-right:3.000px;box-sizing:border-box;">0</div>
<div style="left:2350px;top:963px;width:146px;height:28px;line-height:28px;font-family:'Liberation Serif', serif;font-size:22.6px;color:#000;text-align:right;white-space:pre;padding-right:3.000px;box-sizing:border-box;">0</div>
<svg style="left:2536px;top:6px" width="18" height="14"><polygon points="9,3 15,11.5 3,11.5" fill="#606060" stroke="#606060" stroke-width="2.5" stroke-linejoin="round"/></svg>
<div style="left:2539px;top:275px;width:12px;height:250px;border-radius:6px;background:#7a7a7a"></div>
<svg style="left:2536px;top:1131px" width="18" height="14"><polygon points="3,3 15,3 9,11" fill="#606060" stroke="#606060" stroke-width="2.5" stroke-linejoin="round"/></svg>
<div style="left:2529px;top:59px;width:1px;height:1090px;background:#c8c8c8;"></div>
<div style="left:0px;top:1150px;width:2560px;height:33px;background:#f3f3f3;"></div>
<div style="left:0px;top:1149px;width:2530px;height:1px;background:#a6a6a6;"></div>
<svg style="left:26px;top:1158px" width="12" height="16"><polygon points="9,2 9,14 2,8" fill="#c0c0c0"/></svg>
<svg style="left:61px;top:1158px" width="12" height="16"><polygon points="3,2 3,14 10,8" fill="#1e7145"/></svg>
<div style="left:118px;top:1149px;width:70px;height:30px;line-height:30px;text-align:center;font-family:'Liberation Sans', sans-serif;font-size:19px;letter-spacing:0.12px;color:#444;white-space:pre">Start</div>
<div style="left:188px;top:1149px;width:102px;height:30px;line-height:30px;text-align:center;font-family:'Liberation Sans', sans-serif;font-size:19px;letter-spacing:0.12px;color:#444;white-space:pre">1. Initial</div>
<div style="left:290px;top:1149px;width:269px;height:30px;line-height:30px;text-align:center;font-family:'Liberation Sans', sans-serif;font-size:19px;letter-spacing:0.12px;color:#444;white-space:pre">2. Revenue &amp; Gross Profit</div>
<div style="left:559px;top:1150px;width:194px;height:33px;background:#ffffff;"></div>
<div style="left:559px;top:1149px;width:1px;height:31px;background:#a6a6a6;"></div>
<div style="left:752px;top:1149px;width:1px;height:31px;background:#a6a6a6;"></div>
<div style="left:559px;top:1177px;width:194px;height:2px;background:#1e7145;"></div>
<div style="left:559px;top:1149px;width:194px;height:30px;line-height:30px;text-align:center;font-family:'Liberation Sans', sans-serif;font-size:19px;font-weight:bold;color:#1e7145;white-space:pre">3. SG&amp;A &amp; CAPEX</div>
<div style="left:753px;top:1149px;width:140px;height:30px;line-height:30px;text-align:center;font-family:'Liberation Sans', sans-serif;font-size:19px;letter-spacing:0.12px;color:#444;white-space:pre">4. Personnel</div>
<div style="left:893px;top:1149px;width:220px;height:30px;line-height:30px;text-align:center;font-family:'Liberation Sans', sans-serif;font-size:19px;letter-spacing:0.12px;color:#444;white-space:pre">5. Income Statement</div>
<div style="left:1113px;top:1149px;width:316px;height:30px;line-height:30px;text-align:center;font-family:'Liberation Sans', sans-serif;font-size:19px;letter-spacing:0.12px;color:#444;white-space:pre">5.1 Income Statement monthly</div>
<div style="left:1429px;top:1149px;width:151px;height:30px;line-height:30px;text-align:center;font-family:'Liberation Sans', sans-serif;font-size:19px;letter-spacing:0.12px;color:#444;white-space:pre">6. Cash Flows</div>
<div style="left:1580px;top:1149px;width:247px;height:30px;line-height:30px;text-align:center;font-family:'Liberation Sans', sans-serif;font-size:19px;letter-spacing:0.12px;color:#444;white-space:pre">6.1 Cash Flows monthly</div>
<div style="left:1846px;top:1149px;width:148px;height:30px;line-height:30px;font-family:'Liberation Sans', sans-serif;font-size:19px;letter-spacing:-0.35px;color:#444;white-space:pre">7. Balance S</div>
<div style="left:118px;top:1153px;width:1px;height:26px;background:#bdbdbd;"></div>
<div style="left:188px;top:1153px;width:1px;height:26px;background:#bdbdbd;"></div>
<div style="left:290px;top:1153px;width:1px;height:26px;background:#bdbdbd;"></div>
<div style="left:893px;top:1153px;width:1px;height:26px;background:#bdbdbd;"></div>
<div style="left:1113px;top:1153px;width:1px;height:26px;background:#bdbdbd;"></div>
<div style="left:1429px;top:1153px;width:1px;height:26px;background:#bdbdbd;"></div>
<div style="left:1580px;top:1153px;width:1px;height:26px;background:#bdbdbd;"></div>
<div style="left:1827px;top:1153px;width:1px;height:26px;background:#bdbdbd;"></div>
<div style="left:1958px;top:1168px;width:3px;height:3px;background:#1e7145;"></div>
<div style="left:1964px;top:1168px;width:3px;height:3px;background:#1e7145;"></div>
<div style="left:1970px;top:1168px;width:3px;height:3px;background:#1e7145;"></div>
<svg style="left:1987px;top:1153px" width="26" height="26"><circle cx="13" cy="13" r="10.3" fill="none" stroke="#666" stroke-width="1.5"/><path d="M13 7.8 V18.2 M7.8 13 H18.2" stroke="#555" stroke-width="1.7"/></svg>
<div style="left:2033px;top:1158px;width:3px;height:3px;background:#b4b4b4;"></div>
<div style="left:2033px;top:1164px;width:3px;height:3px;background:#b4b4b4;"></div>
<div style="left:2033px;top:1170px;width:3px;height:3px;background:#b4b4b4;"></div>
<svg style="left:2058px;top:1157px" width="14" height="18"><polygon points="11,2 11,15 2,8.5" fill="#666" stroke="#666" stroke-width="1.5" stroke-linejoin="round"/></svg>
<div style="left:2078px;top:1160px;width:26px;height:11px;border-radius:5.5px;background:#6e6e6e"></div>
<svg style="left:2509px;top:1157px" width="14" height="18"><polygon points="3,2 3,15 12,8.5" fill="#666" stroke="#666" stroke-width="1.5" stroke-linejoin="round"/></svg>
</body></html>
